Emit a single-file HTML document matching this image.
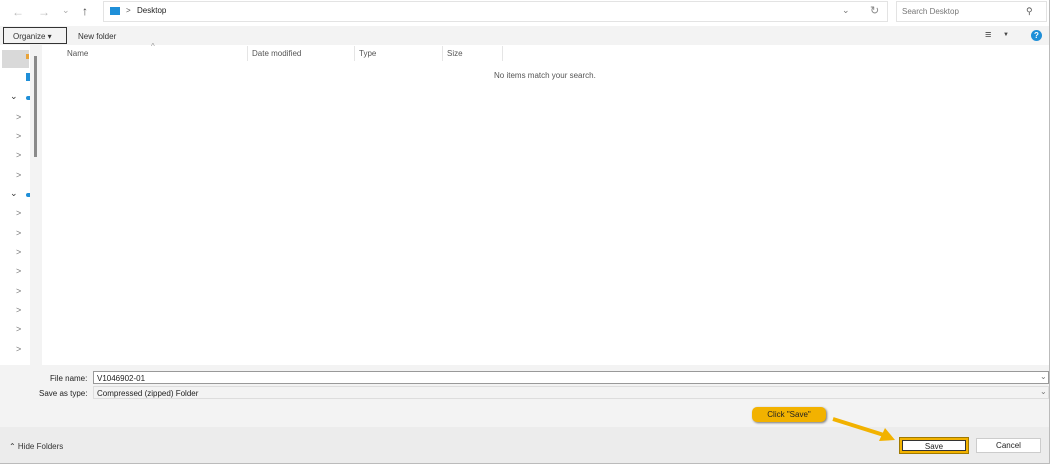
<!DOCTYPE html><html><head><style>
*{margin:0;padding:0;box-sizing:border-box}
body{width:1054px;height:464px;overflow:hidden;background:#fff;font-family:"Liberation Sans",sans-serif;font-size:8px;color:#222;position:relative}
.a{position:absolute}
.chev{position:absolute;left:16px;color:#777;font-size:9px}
</style></head><body>
<div class="a" style="left:0;top:0;width:1050px;height:26px;background:#fff"></div>
<div class="a" style="left:12px;top:5px;color:#bbb;font-size:12px">&#8592;</div>
<div class="a" style="left:38px;top:5px;color:#bbb;font-size:12px">&#8594;</div>
<div class="a" style="left:62px;top:5px;color:#aaa;font-size:9px">&#8964;</div>
<div class="a" style="left:82px;top:4px;color:#444;font-size:12px">&#8593;</div>
<div class="a" style="left:103px;top:1px;width:785px;height:21px;border:1px solid #e3e3e3;background:#fff"></div>
<div class="a" style="left:110px;top:7px;width:10px;height:8px;background:#1f8fd8"></div>
<div class="a" style="left:126px;top:6px;color:#555">&gt;</div>
<div class="a" style="left:137px;top:6px">Desktop</div>
<div class="a" style="left:842px;top:5px;color:#777;font-size:9px">&#8964;</div>
<div class="a" style="left:870px;top:4px;color:#888;font-size:11px">&#8635;</div>
<div class="a" style="left:896px;top:1px;width:151px;height:21px;border:1px solid #e3e3e3"></div>
<div class="a" style="left:902px;top:7px;color:#777">Search Desktop</div>
<div class="a" style="left:1026px;top:6px;color:#555;font-size:9px">&#9906;</div>
<div class="a" style="left:0;top:26px;width:1050px;height:19px;background:#f3f3f3"></div>
<div class="a" style="left:3px;top:27px;width:64px;height:17px;border:1px solid #333;background:#f3f3f3"></div>
<div class="a" style="left:13px;top:32px;color:#333">Organize &#9662;</div>
<div class="a" style="left:78px;top:32px;color:#333">New folder</div>
<div class="a" style="left:985px;top:29px;color:#444;font-size:11px">&#8801;</div>
<div class="a" style="left:1003px;top:32px;color:#444;font-size:6px">&#9660;</div>
<div class="a" style="left:1031px;top:30px;width:11px;height:11px;border-radius:50%;background:#1f8fd8;color:#fff;font-size:8px;text-align:center;line-height:11px;font-weight:bold">?</div>
<div class="a" style="left:30px;top:45px;width:12px;height:320px;background:#f3f3f3"></div>
<div class="a" style="left:34px;top:56px;width:3px;height:101px;background:#8a8a8a"></div>
<div class="a" style="left:2px;top:50px;width:27px;height:18px;background:#d9d9d9"></div>
<div class="a" style="left:26px;top:54px;width:3px;height:5px;background:#e8a33a"></div>
<div class="a" style="left:26px;top:73px;width:4px;height:8px;background:#1f8fd8"></div>
<div class="a" style="left:26px;top:96px;width:4px;height:4px;background:#1f8fd8;border-radius:2px 0 0 2px"></div>
<div class="a" style="left:26px;top:193px;width:4px;height:4px;background:#1f8fd8;border-radius:2px 0 0 2px"></div>
<div class="chev" style="left:10px;top:91px;color:#333">&#8964;</div>
<div class="chev" style="left:10px;top:188px;color:#333">&#8964;</div>
<div class="chev" style="top:112px">&gt;</div><div class="chev" style="top:131px">&gt;</div><div class="chev" style="top:150px">&gt;</div><div class="chev" style="top:170px">&gt;</div>
<div class="chev" style="top:208px">&gt;</div><div class="chev" style="top:228px">&gt;</div><div class="chev" style="top:247px">&gt;</div><div class="chev" style="top:266px">&gt;</div><div class="chev" style="top:286px">&gt;</div><div class="chev" style="top:305px">&gt;</div><div class="chev" style="top:324px">&gt;</div><div class="chev" style="top:344px">&gt;</div>
<div class="a" style="left:67px;top:49px;color:#555">Name</div>
<div class="a" style="left:151px;top:42px;color:#999;font-size:8px">^</div>
<div class="a" style="left:247px;top:46px;width:1px;height:15px;background:#e5e5e5"></div>
<div class="a" style="left:252px;top:49px;color:#555">Date modified</div>
<div class="a" style="left:354px;top:46px;width:1px;height:15px;background:#e5e5e5"></div>
<div class="a" style="left:359px;top:49px;color:#555">Type</div>
<div class="a" style="left:442px;top:46px;width:1px;height:15px;background:#e5e5e5"></div>
<div class="a" style="left:447px;top:49px;color:#555">Size</div>
<div class="a" style="left:502px;top:46px;width:1px;height:15px;background:#e5e5e5"></div>
<div class="a" style="left:494px;top:71px;color:#555">No items match your search.</div>
<div class="a" style="left:0;top:365px;width:1050px;height:62px;background:#f3f3f3"></div>
<div class="a" style="left:0;top:427px;width:1050px;height:37px;background:#ececec"></div>
<div class="a" style="left:1049px;top:0;width:1px;height:464px;background:#bbb"></div>
<div class="a" style="left:0;top:463px;width:1050px;height:1px;background:#bbb"></div>
<div class="a" style="left:50px;top:374px">File name:</div>
<div class="a" style="left:93px;top:371px;width:956px;height:13px;border:1px solid #999;background:#fff"></div>
<div class="a" style="left:97px;top:374px">V1046902-01</div>
<div class="a" style="left:1040px;top:372px;color:#777;font-size:8px">&#8964;</div>
<div class="a" style="left:39px;top:389px">Save as type:</div>
<div class="a" style="left:93px;top:386px;width:956px;height:13px;border:1px solid #ddd;background:#f3f3f3"></div>
<div class="a" style="left:97px;top:389px">Compressed (zipped) Folder</div>
<div class="a" style="left:1040px;top:387px;color:#777;font-size:8px">&#8964;</div>
<div class="a" style="left:9px;top:442px;color:#333">&#8963; Hide Folders</div>
<div class="a" style="left:752px;top:407px;width:74px;height:15px;background:#f2b200;border-radius:5px;box-shadow:1px 1px 2px #777;text-align:center;line-height:15px;color:#222">Click "Save"</div>
<svg class="a" style="left:825px;top:414px" width="72" height="30"><line x1="8" y1="5" x2="62" y2="22" stroke="#f2b200" stroke-width="4"/><polygon points="70,26 54,27 60,14" fill="#f2b200"/></svg>
<div class="a" style="left:900px;top:438px;width:68px;height:15px;border:2px solid #f2b200;outline:1px solid #a07a00;background:#fff;text-align:center;line-height:11px"><div style="border:1px solid #333;height:11px;margin:0">Save</div></div>
<div class="a" style="left:976px;top:438px;width:65px;height:15px;border:1px solid #ccc;background:#fff;text-align:center;line-height:13px">Cancel</div>
</body></html>
